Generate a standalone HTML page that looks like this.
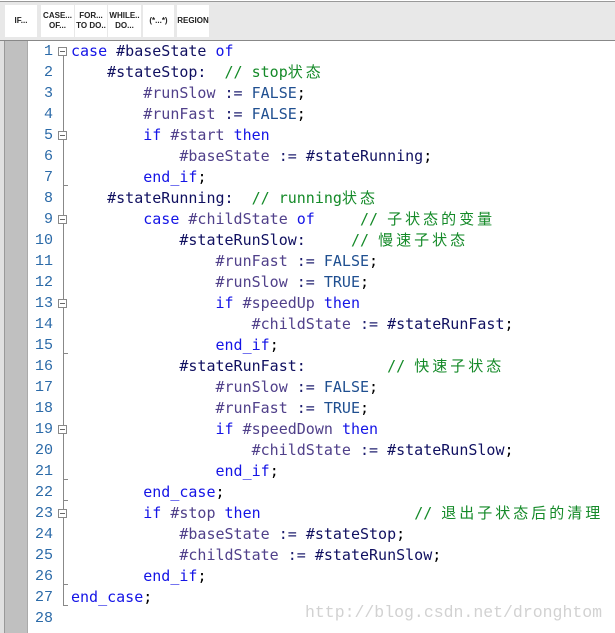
<!DOCTYPE html><html><head><meta charset="utf-8"><style>
body{margin:0;width:615px;height:633px;background:#fff;position:relative;overflow:hidden;font-family:"Liberation Mono","Noto Sans CJK SC",monospace}
.tb{position:absolute;left:0;top:1px;width:615px;height:38px;background:#e8e8e8;border-top:1px solid #999;border-bottom:1px solid #888}
.b{position:absolute;top:3px;height:32px;background:#fff;font:bold 8px "Liberation Sans",sans-serif;color:#222;display:flex;align-items:center;justify-content:center;text-align:center;line-height:10px}
.ls{position:absolute;left:0;top:41px;width:4px;height:592px;background:#e0e0e0;border-right:1px solid #999}
.gc{position:absolute;left:5px;top:41px;width:22px;height:592px;background:#c0c0c0;border-right:1px solid #aaa}
.nums{position:absolute;left:28px;top:41px;width:25px;text-align:right;color:#2b6aa8;font-size:15px;line-height:21px;white-space:pre}
pre{position:absolute;left:71px;top:41px;margin:0;font-size:15px;line-height:21px;color:#000}
.k{color:#1414e6}.l{color:#101060}.v{color:#50408a}.c{color:#148a28}.f{color:#1f4f90}.o{color:#202070}
.z{letter-spacing:3px}
.fl{position:absolute;left:63px;width:1px;background:#888}
.bx{position:absolute;left:58px;width:9px;height:9px;border:1px solid #888;background:#fff;box-sizing:border-box}
.bx:after{content:"";position:absolute;left:1px;top:3px;width:5px;height:1px;background:#666}
.tk{position:absolute;left:63px;width:5px;height:1px;background:#888}
.wm{position:absolute;left:305px;top:603px;font-family:"Liberation Mono",monospace;font-size:16.5px;color:#d2d2d2}
</style></head><body>
<div class="tb">
<div class="b" style="left:5px;width:32px">IF...</div>
<div class="b" style="left:41px;width:33px">CASE...<br>OF...</div>
<div class="b" style="left:75px;width:32px">FOR...<br>TO DO..</div>
<div class="b" style="left:108px;width:33px">WHILE..<br>DO...</div>
<div class="b" style="left:143px;width:31px">(*...*)</div>
<div class="b" style="left:177px;width:32px">REGION</div>
</div>
<div class="ls"></div><div class="gc"></div>
<div class="nums">1
2
3
4
5
6
7
8
9
10
11
12
13
14
15
16
17
18
19
20
21
22
23
24
25
26
27
28</div>
<div class="fl" style="top:56px;height:550px"></div>
<div class="bx" style="top:47px"></div>
<div class="bx" style="top:131px"></div>
<div class="bx" style="top:215px"></div>
<div class="bx" style="top:299px"></div>
<div class="bx" style="top:425px"></div>
<div class="bx" style="top:509px"></div>
<div class="tk" style="top:185px"></div>
<div class="tk" style="top:353px"></div>
<div class="tk" style="top:479px"></div>
<div class="tk" style="top:500px"></div>
<div class="tk" style="top:584px"></div>
<div class="tk" style="top:605px"></div>
<pre><span class="k">case</span> <span class="l">#baseState</span> <span class="k">of</span>
    <span class="l">#stateStop:</span>  <span class="c">// stop<span class="z">状态</span></span>
        <span class="v">#runSlow</span> <span class="o">:=</span> <span class="f">FALSE</span>;
        <span class="v">#runFast</span> <span class="o">:=</span> <span class="f">FALSE</span>;
        <span class="k">if</span> <span class="v">#start</span> <span class="k">then</span>
            <span class="v">#baseState</span> <span class="o">:=</span> <span class="l">#stateRunning</span>;
        <span class="k">end_if</span>;
    <span class="l">#stateRunning:</span>  <span class="c">// running<span class="z">状态</span></span>
        <span class="k">case</span> <span class="v">#childState</span> <span class="k">of</span>     <span class="c">// <span class="z">子状态的变量</span></span>
            <span class="l">#stateRunSlow:</span>     <span class="c">// <span class="z">慢速子状态</span></span>
                <span class="v">#runFast</span> <span class="o">:=</span> <span class="f">FALSE</span>;
                <span class="v">#runSlow</span> <span class="o">:=</span> <span class="f">TRUE</span>;
                <span class="k">if</span> <span class="v">#speedUp</span> <span class="k">then</span>
                    <span class="v">#childState</span> <span class="o">:=</span> <span class="l">#stateRunFast</span>;
                <span class="k">end_if</span>;
            <span class="l">#stateRunFast:</span>         <span class="c">// <span class="z">快速子状态</span></span>
                <span class="v">#runSlow</span> <span class="o">:=</span> <span class="f">FALSE</span>;
                <span class="v">#runFast</span> <span class="o">:=</span> <span class="f">TRUE</span>;
                <span class="k">if</span> <span class="v">#speedDown</span> <span class="k">then</span>
                    <span class="v">#childState</span> <span class="o">:=</span> <span class="l">#stateRunSlow</span>;
                <span class="k">end_if</span>;
        <span class="k">end_case</span>;
        <span class="k">if</span> <span class="v">#stop</span> <span class="k">then</span>                 <span class="c">// <span class="z">退出子状态后的清理</span></span>
            <span class="v">#baseState</span> <span class="o">:=</span> <span class="l">#stateStop</span>;
            <span class="v">#childState</span> <span class="o">:=</span> <span class="l">#stateRunSlow</span>;
        <span class="k">end_if</span>;
<span class="k">end_case</span>;
</pre>
<div class="wm">http://blog.csdn.net/dronghtom</div>
</body></html>
